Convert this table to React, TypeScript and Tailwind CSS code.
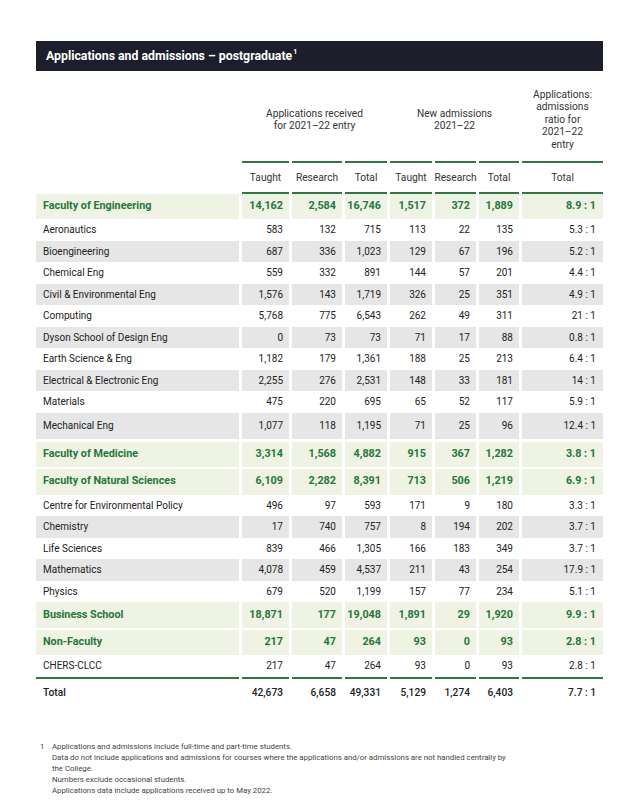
import React from "react";

type Row = {
  name: string;
  v: string[];
  faculty?: boolean;
  gray?: boolean;
  size?: string;
};

const rows: Row[] = [
  { name: "Faculty of Engineering", v: ["14,162", "2,584", "16,746", "1,517", "372", "1,889", "8.9 : 1"], faculty: true, size: "h-[25px]" },
  { name: "Aeronautics", v: ["583", "132", "715", "113", "22", "135", "5.3 : 1"] },
  { name: "Bioengineering", v: ["687", "336", "1,023", "129", "67", "196", "5.2 : 1"], gray: true },
  { name: "Chemical Eng", v: ["559", "332", "891", "144", "57", "201", "4.4 : 1"] },
  { name: "Civil & Environmental Eng", v: ["1,576", "143", "1,719", "326", "25", "351", "4.9 : 1"], gray: true },
  { name: "Computing", v: ["5,768", "775", "6,543", "262", "49", "311", "21 : 1"] },
  { name: "Dyson School of Design Eng", v: ["0", "73", "73", "71", "17", "88", "0.8 : 1"], gray: true },
  { name: "Earth Science & Eng", v: ["1,182", "179", "1,361", "188", "25", "213", "6.4 : 1"] },
  { name: "Electrical & Electronic Eng", v: ["2,255", "276", "2,531", "148", "33", "181", "14 : 1"], gray: true },
  { name: "Materials", v: ["475", "220", "695", "65", "52", "117", "5.9 : 1"] },
  { name: "Mechanical Eng", v: ["1,077", "118", "1,195", "71", "25", "96", "12.4 : 1"], gray: true, size: "h-[26px]" },
  { name: "Faculty of Medicine", v: ["3,314", "1,568", "4,882", "915", "367", "1,282", "3.8 : 1"], faculty: true, size: "mt-[3px] h-[25px]" },
  { name: "Faculty of Natural Sciences", v: ["6,109", "2,282", "8,391", "713", "506", "1,219", "6.9 : 1"], faculty: true, size: "mt-[2px] h-[26px]" },
  { name: "Centre for Environmental Policy", v: ["496", "97", "593", "171", "9", "180", "3.3 : 1"] },
  { name: "Chemistry", v: ["17", "740", "757", "8", "194", "202", "3.7 : 1"], gray: true },
  { name: "Life Sciences", v: ["839", "466", "1,305", "166", "183", "349", "3.7 : 1"] },
  { name: "Mathematics", v: ["4,078", "459", "4,537", "211", "43", "254", "17.9 : 1"], gray: true },
  { name: "Physics", v: ["679", "520", "1,199", "157", "77", "234", "5.1 : 1"] },
  { name: "Business School", v: ["18,871", "177", "19,048", "1,891", "29", "1,920", "9.9 : 1"], faculty: true, size: "h-[26px]" },
  { name: "Non-Faculty", v: ["217", "47", "264", "93", "0", "93", "2.8 : 1"], faculty: true, size: "mt-[2px] h-[25px]" },
  { name: "CHERS-CLCC", v: ["217", "47", "264", "93", "0", "93", "2.8 : 1"] },
];

const total = ["42,673", "6,658", "49,331", "5,129", "1,274", "6,403", "7.7 : 1"];

const grid = "grid grid-cols-[203px_47px_50px_42px_42px_41px_40px_81px] gap-x-[3px]";

const App: React.FC = () => {
  return (
    <div className="w-[640px] min-h-[803px] bg-white font-['Roboto',sans-serif] text-[#222] pt-[41px]">
      <div className="ml-[36px] w-[567px]">
        {/* title bar */}
        <div className="h-[30px] bg-[#1c1f2b] flex items-center pl-[10px] text-white text-[12.3px] font-bold">
          Applications and admissions – postgraduate
          <sup className="text-[7px] font-bold ml-[1px] -top-[4px]">1</sup>
        </div>

        {/* group headings */}
        <div className={`${grid} mt-[8px] h-[82px] items-center text-[10.2px] leading-[12.5px] text-[#333] text-center`}>
          <div />
          <div className="col-span-3">
            Applications received
            <br />
            for 2021–22 entry
          </div>
          <div className="col-span-3">
            New admissions
            <br />
            2021–22
          </div>
          <div>
            Applications:
            <br />
            admissions
            <br />
            ratio for
            <br />
            2021–22
            <br />
            entry
          </div>
        </div>

        {/* sub headings */}
        <div className={`${grid} text-[10.2px] text-[#333]`}>
          <div />
          {["Taught", "Research", "Total", "Taught", "Research", "Total", "Total"].map((h, i) => (
            <div
              key={i}
              className="h-[33px] border-y-2 border-[#2f7a43] flex items-center justify-center"
            >
              {h}
            </div>
          ))}
        </div>

        {/* body */}
        {rows.map((r) => {
          const bg = r.faculty ? "bg-[#eef3e3]" : r.gray ? "bg-[#e6e6e6]" : "";
          const txt = r.faculty
            ? "text-[#23783a] font-bold text-[10.8px]"
            : "text-[#222] text-[10px]";
          return (
            <div key={r.name} className={`${grid} ${r.size ?? "h-[21.5px]"} ${txt}`}>
              <div className={`${bg} flex items-center pl-[7px]`}>{r.name}</div>
              {r.v.map((val, i) => (
                <div
                  key={i}
                  className={`${bg} flex items-center justify-end ${i === 6 ? "pr-[7px]" : "pr-[6px]"}`}
                >
                  {val}
                </div>
              ))}
            </div>
          );
        })}

        {/* total */}
        <div className={`${grid} text-[10.2px] font-medium text-[#222]`}>
          <div className="h-[30px] border-t-2 border-[#2f7a43] flex items-center pl-[7px]">Total</div>
          {total.map((val, i) => (
            <div
              key={i}
              className={`h-[30px] border-t-2 border-[#2f7a43] flex items-center justify-end ${i === 6 ? "pr-[7px]" : "pr-[6px]"}`}
            >
              {val}
            </div>
          ))}
        </div>

        {/* footnote */}
        <div className="mt-[34px] flex text-[7.8px] leading-[11px] text-[#444]">
          <div className="w-[16px] pl-[4px]">1</div>
          <div>
            Applications and admissions include full-time and part-time students.
            <br />
            Data do not include applications and admissions for courses where the applications and/or admissions are not handled centrally by
            <br />
            the College.
            <br />
            Numbers exclude occasional students.
            <br />
            Applications data include applications received up to May 2022.
          </div>
        </div>
      </div>
    </div>
  );
};

export default App;
